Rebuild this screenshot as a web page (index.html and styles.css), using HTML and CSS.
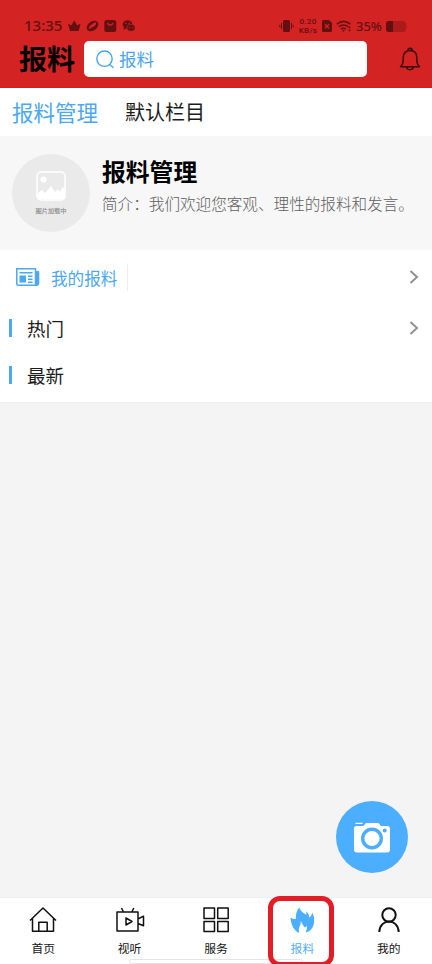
FILE: index.html
```html
<!DOCTYPE html>
<html lang="zh-CN">
<head>
<meta charset="utf-8">
<title>报料</title>
<link rel="stylesheet" href="styles.css">
</head>
<body>
<div class="app">
  <header class="header">
    <div class="status">
      <span class="clock">13:35</span>
      <svg class="status-left" width="68" height="14" viewBox="0 0 68 14">
        <path d="M0 4.500l3.300 2L6.300 1.500l3 5 3.300-2-2 7.500H2z"/>
        <ellipse cx="24.500" cy="7" rx="6.400" ry="4.600" transform="rotate(-38 24.500 7)"/>
        <path class="cut" d="M20.500 10.500q.5-5 7.500-7.500.8 2-1 3.800-2 1-6.500 3.700z"/>
        <rect x="36.300" y="1" width="12" height="12" rx="2.500"/>
        <path class="line" d="M39.300 4.200q3 4 6 0"/>
        <ellipse cx="59.500" cy="5.500" rx="4.800" ry="4.200"/><path d="M56 8l-.5 3 3-2z"/>
        <ellipse class="chat" cx="63" cy="8.800" rx="4.100" ry="3.500"/>
        <g class="cut"><circle cx="57.800" cy="4.400" r=".7"/><circle cx="61.200" cy="4.400" r=".7"/><circle cx="61.700" cy="8.300" r=".6"/><circle cx="64.500" cy="8.300" r=".6"/></g>
      </svg>
      <svg class="vibrate" width="15" height="14" viewBox="0 0 15 14"><rect x="4" y="1" width="7" height="12" rx="1.500"/><path class="wave" d="M2.500 4v6M12.500 4v6M.8 5.800v2.500M14.200 5.800v2.500"/></svg>
      <span class="speed"><span>0.20</span><span>KB/s</span></span>
      <svg class="sim" width="10" height="12" viewBox="0 0 10 12"><path d="M1.500 0H7l3 3v7.500Q10 12 8.500 12h-7Q0 12 0 10.500v-9Q0 0 1.500 0z"/><path class="line" d="M3 4.200l4 4M7 4.200l-4 4"/></svg>
      <svg class="wifi" width="16" height="13" viewBox="0 0 16 13"><path d="M.7 4.200Q7.500-1.500 14.500 4.200M2.800 6.700q4.700-3.600 9.500 0M5 9.200q2.500-2 5 0"/><path class="dot" d="M6 10.300h3L7.500 12zM13.500 6l1.500 2h-3zM12 9.500h3l-1.500 2z"/></svg>
      <span class="percent">35%</span>
      <svg class="battery" width="22" height="11" viewBox="0 0 22 11"><rect class="batt-bg" width="20" height="11" rx="3"/><path d="M3 0h4v11H3Q0 11 0 8V3Q0 0 3 0z"/><path class="batt-bg" d="M20.500 3.500q1.500 2 0 4z"/></svg>
    </div>
    <div class="topbar">
      <h1>报料</h1>
      <div class="search">
        <svg width="19" height="19" viewBox="0 0 19 19"><circle cx="8.500" cy="8.700" r="7.700"/><path d="M13.700 14.500l3.800 3.300"/></svg>
        <span>报料</span>
      </div>
      <svg class="bell" width="22" height="24" viewBox="0 0 22 24"><path d="M8.800 3.600C9 .5 13 .5 13.200 3.600M1.500 19.700q2.700-2.700 2.700-6v-3C4.200 6 7 3.600 11 3.600S17.800 6 17.800 10.700v3q0 3.300 2.700 6zM7.500 20.200c.7 3.300 6.300 3.300 7 0"/></svg>
    </div>
  </header>
  <nav class="tabs"><a class="tab current">报料管理</a><a class="tab">默认栏目</a></nav>
  <section class="profile">
    <div class="avatar">
      <svg width="30" height="30" viewBox="0 0 30 30"><rect x="1" y="1" width="28" height="28" rx="4"/><circle cx="7.500" cy="8.500" r="3"/><path d="M2 22l4-3 3 3 6-7 4 6 3-3 2 3 3-5 2 3v7q0 2-2 2H3q-2 0-2-2z"/></svg>
      <span>图片加载中</span>
    </div>
    <div class="intro"><h2>报料管理</h2><p>简介：我们欢迎您客观、理性的报料和发言。</p></div>
  </section>
  <section class="list">
    <div class="row mine">
      <svg class="news" width="24" height="19" viewBox="0 0 24 19"><path class="side" d="M20 3h2.500q.8 0 .8.800V15q0 3-3 3H19z"/><path class="frame" d="M.8.800h18.700V15q0 2 1.500 2.300H2q-1.200 0-1.200-1.200z"/><path class="frame" d="M3.500 4.700h13M12 8.300h4.500M12 11.300h4.500M12 14.300h4.500"/><rect class="side" x="3.500" y="7.500" width="6.500" height="7"/></svg>
      <span class="mine-label">我的报料</span>
      <svg class="chevron" width="10" height="14" viewBox="0 0 10 14"><path d="M1.500 1l6.500 6-6.500 6"/></svg>
    </div>
    <div class="row hot"><span class="heading">热门</span><svg class="chevron" width="10" height="14" viewBox="0 0 10 14"><path d="M1.500 1l6.500 6-6.500 6"/></svg></div>
    <div class="row latest"><span class="heading">最新</span></div>
  </section>
  <main class="feed">
    <button class="camera" aria-label="拍照">
      <svg width="36" height="31" viewBox="0 0 36 31"><path d="M1.500.8h7v1.200h-7zM2.500 4H9.500L11.500 1.500Q12 1 13 1h10.500q1 0 1.700.8L27 4H33q3 0 3 3V27.500q0 3-3 3H3q-3 0-3-3V6.500Q0 4 2.500 4z"/><circle class="lens" cx="18" cy="16.500" r="9.300"/><circle class="sensor" cx="30.700" cy="8.500" r="2"/></svg>
    </button>
  </main>
  <footer class="dock">
    <a class="item"><svg width="28" height="28" viewBox="0 0 28 28"><path d="M1 14.500L14 2l13 12.500M3.500 12.500V25.300h21V12.500M9.800 25V16.300h8.400V25"/></svg><span>首页</span></a>
    <a class="item"><svg width="30" height="28" viewBox="0 0 30 28"><path d="M2 6h21v19H2zM6.500 2l2 4M18.800 2l-2 4M11 12v7l6-3.500zM23 13l5.500-2.800v9.600L23 17.500"/></svg><span>视听</span></a>
    <a class="item"><svg width="28" height="28" viewBox="0 0 28 28"><path d="M2 2h10.500v10.500H2zM15.700 2h10.500v10.500H15.700zM2 15.500h10.500V25.500H2zM15.700 15.500h10.500V25.500H15.700z"/></svg><span>服务</span></a>
    <a class="item active"><svg width="28" height="28" viewBox="0 0 28 28"><path class="flame" d="M11 27C6 24.500 3 19 2.500 11.500q2 1.700 5.300 1.500Q7.500 6 11.300 1.200q.7 4 7 7.600V5.300q3 2.500 3 6.200 2.500-1.500 2.800-5 3 4.500 1.700 11.500-1.500 7-8.300 8.500 2-4 1.300-6.500l-2.200 1.500L12.500 15q.8 3-.9 5.500-1.600 2.500-.6 6.500z"/></svg><span>报料</span></a>
    <a class="item"><svg class="person" width="28" height="28" viewBox="0 0 28 28"><circle cx="14" cy="9" r="6.700"/><path d="M4.300 26c.5-14 18.900-14 19.400 0"/></svg><span>我的</span></a>
    <div class="home-bar"></div>
    <div class="marker"></div>
  </footer>
</div>
</body>
</html>
```
FILE: styles.css
```css
* { box-sizing: border-box; }
body, h1, h2, p { margin: 0; }
body {
  background: #f4f4f4;
  color: #1c1c1c;
  font-family: "Noto Sans CJK SC", sans-serif;
}
.app { display: flex; flex-direction: column; height: 964px; width: 432px; overflow: hidden; }
svg { display: block; flex: none; fill: none; }

.header { height: 88px; background: #d32323; border-bottom: 1px solid #c62222; padding-top: 15px; }
.status { display: flex; align-items: center; height: 22px; padding-left: 24px; color: #641012; }
.status svg { fill: #641012; }
.clock { font: 500 15px/20px "Noto Sans"; height: 22px; width: 44px; }
.status-left { margin-right: 143px; }
.status .cut { fill: #d32323; }
.status .chat { stroke: #d32323; stroke-width: .7; }
.status .line { fill: none; stroke: #d32323; stroke-width: 1.3; }
.status .wave { stroke: #641012; stroke-width: 1; }
.speed { display: flex; flex-direction: column; width: 20px; margin-left: 4px; text-align: center; font: 500 8px/9px Roboto, sans-serif; letter-spacing: .3px; white-space: nowrap; }
.speed span { display: block; height: 9px; }
.sim { margin-left: 4px; }
.status .wifi { margin-left: 4px; fill: none; stroke: #641012; stroke-width: 1.5; }
.status .wifi .dot { fill: #641012; stroke: none; }
.percent { font: 500 13px/22px "Noto Sans"; margin-left: 4px; width: 27px; white-space: nowrap; }
.battery { margin-left: 3px; }
.status .batt-bg { fill: #ac1b1c; }

.topbar { display: flex; align-items: center; height: 36px; margin-top: 4px; padding-left: 19px; }
h1 { width: 65px; color: #000; font-size: 28px; line-height: 34px; height: 36px; font-weight: 700; }
.search { display: flex; align-items: center; gap: 4px; width: 283px; height: 36px; padding-left: 12px; border-radius: 5px; background: #fff; color: #4aa5ec; font-size: 17.500px; line-height: 36px; }
.search svg { stroke: #4aa5ec; stroke-width: 1.4; width: 19px; }
.bell { margin-left: 32px; stroke: #3a0808; stroke-width: 1.5; stroke-linejoin: round; }

.tabs { display: flex; align-items: center; gap: 27px; height: 48px; padding: 0 12px; background: #fff; }
.tab { font-size: 20px; line-height: 48px; }
.current { color: #4ba8f1; font-size: 21.500px; }

.profile { display: flex; gap: 12px; height: 114px; padding: 18px 0 0 12px; background: #f7f7f7; }
.avatar { display: flex; flex-direction: column; align-items: center; width: 78px; height: 78px; padding-top: 17px; border-radius: 50%; background: #eaeaea; }
.avatar rect { stroke: #fff; stroke-width: 1.5; }
.avatar circle, .avatar path { fill: #fff; }
.avatar span { margin-top: 6px; color: #888; font-size: 6.200px; line-height: 8px; font-weight: 500; }
h2 { color: #000; font-size: 23.800px; line-height: 33px; font-weight: 700; }
.intro p { margin-top: 4px; color: #606060; font-size: 15.600px; line-height: 24px; font-weight: 300; white-space: nowrap; }

.list { height: 153px; background: #fff; border-bottom: 1px solid #eee; }
.row { display: flex; align-items: center; padding-right: 13px; }
.chevron { margin-left: auto; stroke: #929292; stroke-width: 2; }
.mine { height: 54px; padding-left: 16px; }
.news .frame { stroke: #4ba8f1; stroke-width: 1.5; }
.news .side { fill: #4ba8f1; }
.mine-label { width: 77px; height: 27px; margin-left: 11px; border-right: 1px solid #eee; color: #4ba8f1; font-size: 16.600px; line-height: 29px; }
.heading { display: flex; align-items: center; gap: 15px; font-size: 18.500px; line-height: 26px; }
.heading::before { content: ""; width: 3px; height: 18px; margin-top: 1px; background: #4ba8f1; }
.hot { height: 47px; padding-left: 9px; }
.latest { height: 47px; padding-left: 9px; }

.feed { display: flex; flex: 1; justify-content: flex-end; align-items: flex-end; padding: 0 24px 24px 0; background: #f4f4f4; }
.camera { display: grid; place-items: center; width: 72px; height: 72px; padding: 0; border: 0; border-radius: 50%; background: #4caeff; }
.camera svg { fill: #fff; }
.camera .lens { stroke: #4caeff; stroke-width: 3.400; }
.camera .sensor { fill: #4caeff; }

.dock { position: relative; display: grid; grid-template-columns: repeat(5, 1fr); height: 67px; border-top: 1px solid #eee; background: #fff; }
.item { display: flex; flex-direction: column; align-items: center; padding-top: 8px; color: #151515; font-size: 11.800px; line-height: 18px; }
.item svg { margin-bottom: 5px; stroke: #111; stroke-width: 1.5; stroke-linejoin: round; }
.item .person { stroke-width: 2; }
.item .flame { fill: #4caeff; stroke: none; }
.active { color: #55aef6; }
.home-bar { position: absolute; left: 129px; bottom: 0; width: 174px; height: 5px; border: 1px solid #e4e4e4; border-radius: 3px; background: #fff; }
.marker { position: absolute; left: 268px; top: -2px; width: 66px; height: 71px; border: 5px solid #e31c26; border-radius: 12px; }
```
